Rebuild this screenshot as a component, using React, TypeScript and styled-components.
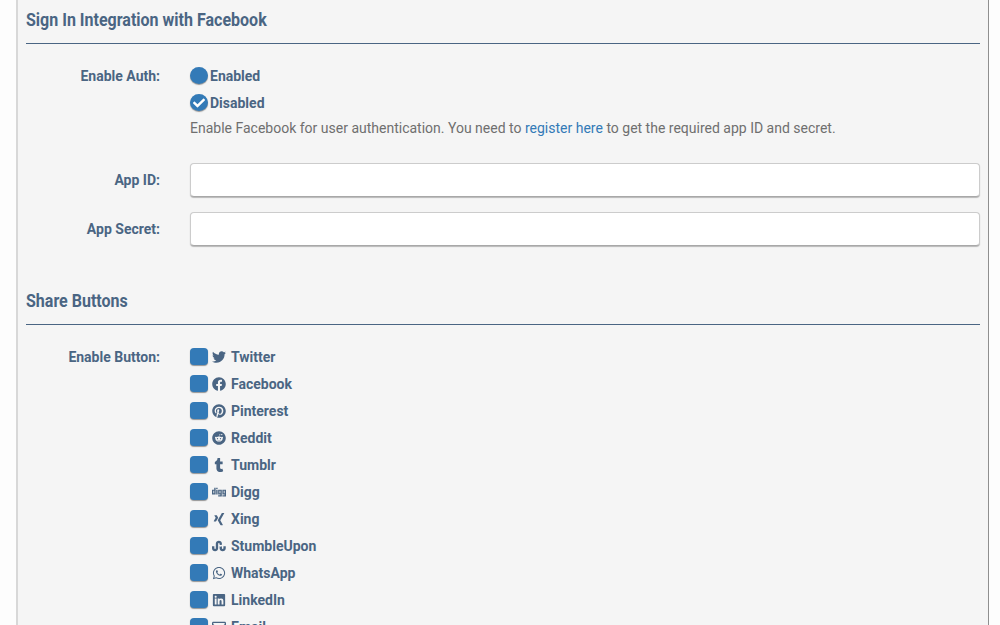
import React from "react";
import styled, { createGlobalStyle } from "styled-components";
import {
	FaCheck,
	FaDigg,
	FaFacebook,
	FaLinkedin,
	FaPinterest,
	FaReddit,
	FaRegEnvelope,
	FaStumbleupon,
	FaTumblr,
	FaTwitter,
	FaWhatsapp,
	FaXing,
} from "react-icons/fa";

const GlobalStyle = createGlobalStyle`
    html, body {
        margin: 0;
        height: 625px;
        overflow: hidden;
        background: #fdfdfd;
        font-family: Roboto, "Liberation Sans", sans-serif;
    }
`;

const Panel = styled.div`
    box-sizing: border-box;
    width: 973px;
    height: 760px;
    margin-left: 16px;
    padding: 8px 8px 0;
    background: #f5f5f5;
    border-left: 2px solid #d8d8d8;
    border-right: 1px solid #8f8f8f;
`;

const SectionTitle = styled.h2<{ $top: number }>`
    box-sizing: content-box;
    margin: ${(p) => p.$top}px 0 0;
    height: 35px;
    font-size: 19px;
    line-height: 24px;
    font-weight: 700;
    color: #4a6583;
    border-bottom: 1px solid #4a6583;
`;

const TitleText = styled.span`
    display: inline-block;
    transform: scaleX(0.843);
    transform-origin: left center;
    white-space: nowrap;
`;

const Row = styled.div<{ $top: number }>`
    display: grid;
    grid-template-columns: 134px 1fr;
    column-gap: 30px;
    margin-top: ${(p) => p.$top}px;
`;

const Label = styled.label<{ $field?: boolean }>`
    text-align: right;
    font-size: 14px;
    font-weight: 700;
    line-height: ${(p) => (p.$field ? "34px" : "18px")};
    color: #4a6583;
`;

const Options = styled.div`
    display: flex;
    flex-direction: column;
    gap: 9px;
`;

const Option = styled.div`
    display: flex;
    align-items: center;
    height: 18px;
    font-size: 14px;
    font-weight: 700;
    color: #4a6583;
`;

const Toggle = styled.span<{ $round?: boolean }>`
    box-sizing: border-box;
    display: inline-flex;
    align-items: center;
    justify-content: center;
    width: 18px;
    height: 17px;
    margin: 0 2px 1px 0;
    flex: none;
    color: #fff;
    font-size: 12px;
    background: #337ab7;
    border-radius: ${(p) => (p.$round ? "50%" : "4px")};
    box-shadow: 0 1px 1px rgba(70, 70, 70, 0.55);
`;

const IconSlot = styled.span`
    display: inline-flex;
    align-items: center;
    justify-content: center;
    width: 14px;
    margin: 0 5px 0 2px;
    font-size: 14px;
    color: #4a6583;
`;

const Help = styled.p`
    margin: 6px 0 0;
    font-size: 14px;
    line-height: 20px;
    color: #6f6f6f;
`;

const HelpLink = styled.a`
    color: #337ab7;
    text-decoration: none;
`;

const Input = styled.input`
    box-sizing: border-box;
    display: block;
    width: 100%;
    height: 34px;
    padding: 6px 12px;
    background: #fff;
    border: 1px solid #ccc;
    border-bottom-color: #a8a8a8;
    border-radius: 4px;
    box-shadow: 0 1px 1px rgba(0, 0, 0, 0.25);
    outline: none;
`;

const shareButtons = [
	{ name: "Twitter", icon: <FaTwitter /> },
	{ name: "Facebook", icon: <FaFacebook /> },
	{ name: "Pinterest", icon: <FaPinterest /> },
	{ name: "Reddit", icon: <FaReddit /> },
	{ name: "Tumblr", icon: <FaTumblr /> },
	{ name: "Digg", icon: <FaDigg /> },
	{ name: "Xing", icon: <FaXing /> },
	{ name: "StumbleUpon", icon: <FaStumbleupon /> },
	{ name: "WhatsApp", icon: <FaWhatsapp /> },
	{ name: "LinkedIn", icon: <FaLinkedin /> },
	{ name: "Email", icon: <FaRegEnvelope /> },
];

export default function App() {
	return (
		<>
			<GlobalStyle />
			<Panel>
				<SectionTitle $top={0}>
					<TitleText>Sign In Integration with Facebook</TitleText>
				</SectionTitle>

				<Row $top={23}>
					<Label>Enable Auth:</Label>
					<div>
						<Options>
							<Option>
								<Toggle $round />
								Enabled
							</Option>
							<Option>
								<Toggle $round>
									<FaCheck />
								</Toggle>
								Disabled
							</Option>
						</Options>
						<Help>
							Enable Facebook for user authentication. You need to{" "}
							<HelpLink href="#">register here</HelpLink> to get the required
							app ID and secret.
						</Help>
					</div>
				</Row>

				<Row $top={25}>
					<Label $field>App ID:</Label>
					<Input />
				</Row>
				<Row $top={15}>
					<Label $field>App Secret:</Label>
					<Input />
				</Row>

				<SectionTitle $top={43}>
					<TitleText>Share Buttons</TitleText>
				</SectionTitle>

				<Row $top={23}>
					<Label>Enable Button:</Label>
					<Options>
						{shareButtons.map((b) => (
							<Option key={b.name}>
								<Toggle />
								<IconSlot>{b.icon}</IconSlot>
								{b.name}
							</Option>
						))}
					</Options>
				</Row>
			</Panel>
		</>
	);
}
